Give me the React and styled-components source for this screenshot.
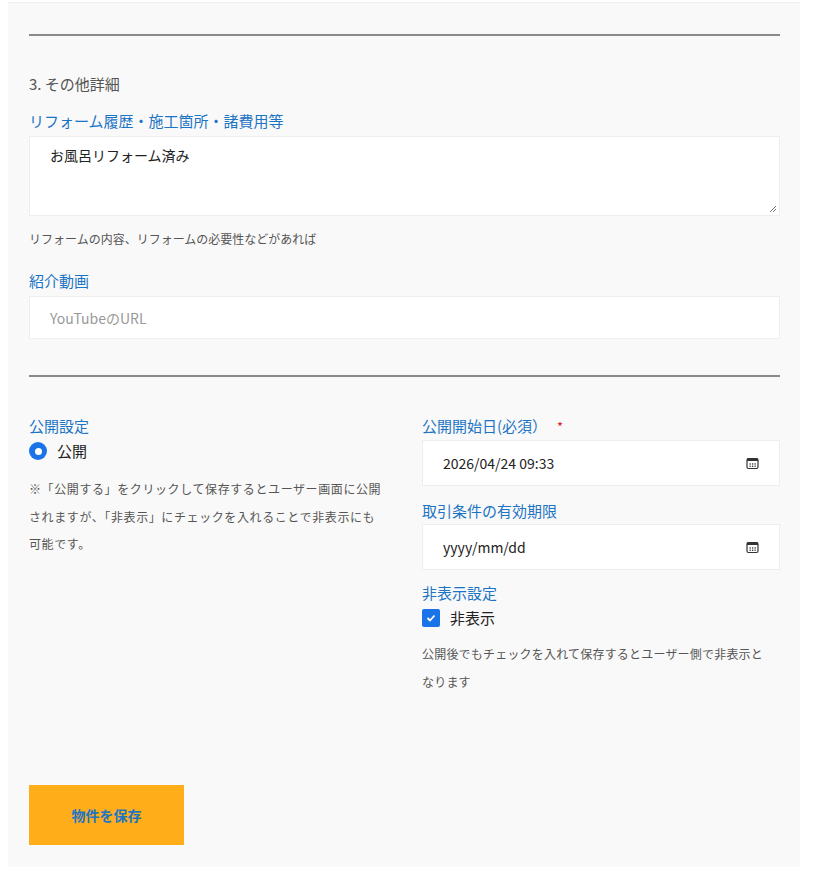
import React from "react";
import styled, { createGlobalStyle } from "styled-components";

const G = createGlobalStyle`
  body{margin:0;background:#fff;font-family:"Noto Sans CJK JP","Noto Sans",sans-serif;}
`;
const Panel = styled.div`
  margin:2px 28px 0 8px;background:#f9f9f9;padding:31px 20px 22px 21px;border-top:1px solid #eee;
`;
const Rule = styled.hr`border:0;border-top:2px solid #8a8a8a;margin:0;`;
const Section = styled.div`font-size:15px;color:#555;margin:37px 0 15px;line-height:22px;`;
const Label = styled.div`font-size:15px;color:#1c74c4;line-height:22px;margin-bottom:${p=>p.mb||4}px;`;
const Star = styled.span`color:#e02020;margin-left:10px;font-size:13px;`;
const Area = styled.div`background:#fff;border:1px solid #eee;height:62px;padding:8px 20px;font-size:14px;color:#222;position:relative;`;
const Grip = styled.svg`position:absolute;right:2px;bottom:2px;`;
const Input = styled.div`background:#fff;border:1px solid #eee;height:43px;box-sizing:border-box;padding:0 20px;display:flex;align-items:center;justify-content:space-between;font-size:14px;color:${p=>p.ph?"#999":"#222"};`;
const Help = styled.div`font-size:12px;color:#555;line-height:${p=>p.lh||22}px;margin:${p=>p.m||"0"};letter-spacing:${p=>p.ls||0}px;`;
const Cols = styled.div`display:grid;grid-template-columns:393px 1fr;margin-top:38px;`;
const Col = styled.div`display:flex;flex-direction:column;`;
const Opt = styled.div`display:flex;align-items:center;gap:10px;font-size:15px;color:#222;line-height:24px;margin-bottom:${p=>p.mb||0}px;`;
const Radio = styled.span`width:18px;height:18px;border-radius:50%;background:#1a73e8;display:flex;align-items:center;justify-content:center;&::after{content:"";width:7px;height:7px;border-radius:50%;background:#fff;}`;
const Check = styled.span`width:18px;height:18px;border-radius:2px;background:#1a73e8;display:flex;align-items:center;justify-content:center;`;
const Btn = styled.button`margin-top:90px;width:155px;height:60px;border:0;background:#ffae1a;color:#1c74c4;font-weight:bold;font-size:14px;font-family:inherit;`;
const Cal = () => (
  <svg width="13" height="13" viewBox="0 0 13 13"><rect x="1" y="1.5" width="11" height="10" rx="1.5" fill="none" stroke="#333" strokeWidth="1.2"/><rect x="1" y="1.5" width="11" height="2.5" fill="#333"/>{[3.5,6,8.5].map(x=>[6.3,8.6].map(y=><rect key={x+"-"+y} x={x} y={y} width="1.3" height="1.3" fill="#333"/>))}</svg>
);

export default function App(){
  return <><G/><Panel>
    <Rule/>
    <Section>3. その他詳細</Section>
    <Label>リフォーム履歴・施工箇所・諸費用等</Label>
    <Area>お風呂リフォーム済み<Grip width="8" height="8" viewBox="0 0 8 8"><path d="M1 7L7 1M4 7L7 4" stroke="#777" strokeWidth="1"/></Grip></Area>
    <Help m="12px 0 20px">リフォームの内容、リフォームの必要性などがあれば</Help>
    <Label>紹介動画</Label>
    <Input ph>YouTubeのURL</Input>
    <div style={{height:36}}/>
    <Rule/>
    <Cols>
      <Col>
        <Label mb={2}>公開設定</Label>
        <Opt mb={12}><Radio/>公開</Opt>
        <Help lh={27.5} ls={0.6}>※「公開する」をクリックして保存するとユーザー画面に公開<br/>されますが、「非表示」にチェックを入れることで非表示にも<br/>可能です。</Help>
      </Col>
      <Col>
        <Label mb={2}>公開開始日(必須）<Star>*</Star></Label>
        <Input style={{height:46}}>2026/04/24 09:33<Cal/></Input>
        <div style={{height:14}}/>
        <Label mb={2}>取引条件の有効期限</Label>
        <Input style={{height:46}}>yyyy/mm/dd<Cal/></Input>
        <div style={{height:12}}/>
        <Label mb={2}>非表示設定</Label>
        <Opt mb={10}><Check><svg width="10" height="8" viewBox="0 0 10 8"><path d="M1.5 4l2.5 2.5 4.5-5" stroke="#fff" strokeWidth="1.8" fill="none"/></svg></Check>非表示</Opt>
        <Help lh={27.5} ls={0.2}>公開後でもチェックを入れて保存するとユーザー側で非表示と<br/>なります</Help>
      </Col>
    </Cols>
    <Btn>物件を保存</Btn>
  </Panel></>;
}
